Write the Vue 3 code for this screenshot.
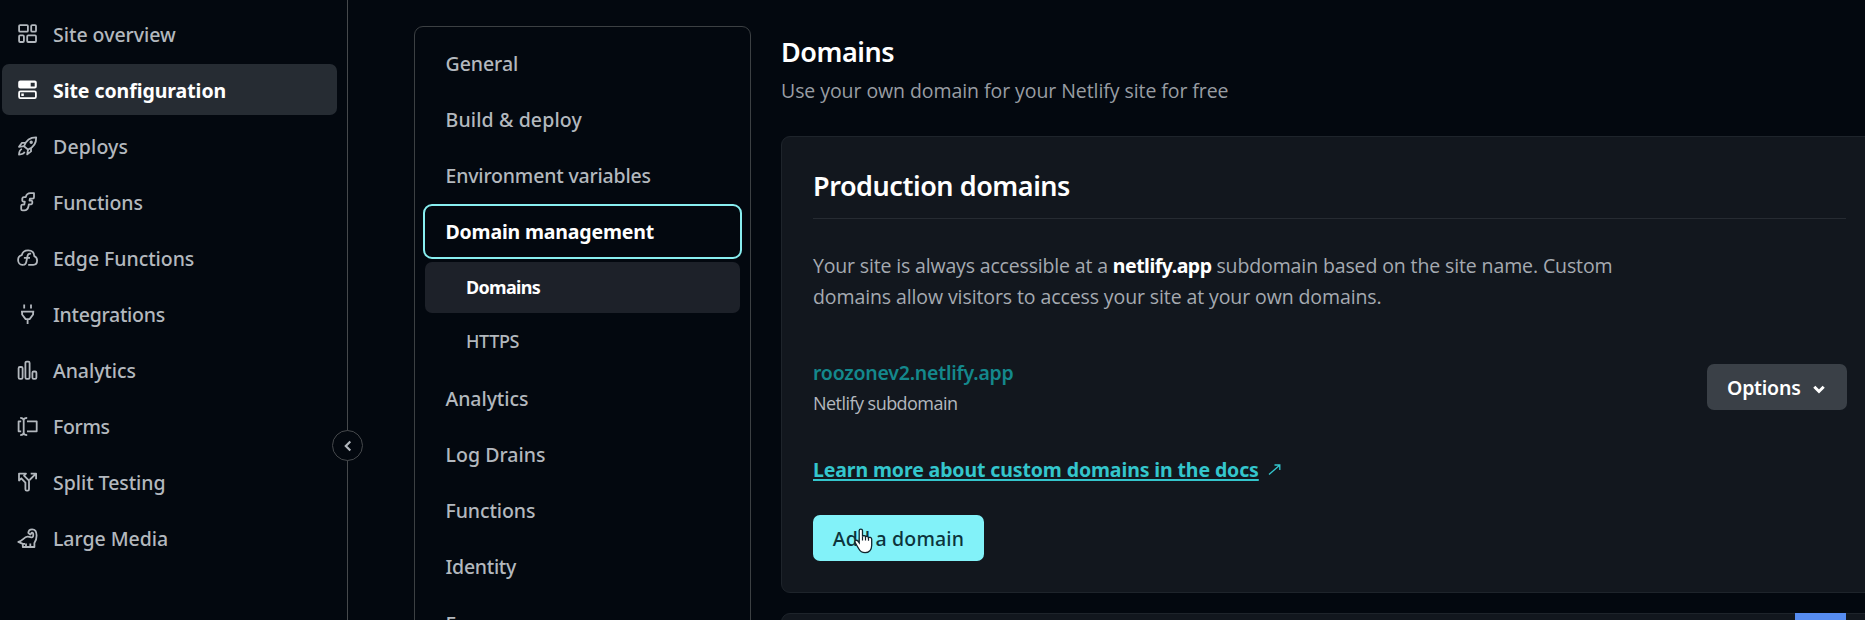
<script setup>
const siteNav = [
  { label: 'Site overview', icon: 'overview', track: -0.02 },
  { label: 'Site configuration', icon: 'config', track: -0.06, active: true },
  { label: 'Deploys', icon: 'deploys', track: 0.15 },
  { label: 'Functions', icon: 'functions', track: -0.09 },
  { label: 'Edge Functions', icon: 'edge', track: -0.05 },
  { label: 'Integrations', icon: 'plug', track: -0.28 },
  { label: 'Analytics', icon: 'bars', track: -0.07 },
  { label: 'Forms', icon: 'forms', track: -0.36 },
  { label: 'Split Testing', icon: 'split', track: -0.05 },
  { label: 'Large Media', icon: 'media', track: -0.04 },
]

const settingsNav = [
  { label: 'General', track: -0.05 },
  { label: 'Build & deploy', track: 0.13 },
  { label: 'Environment variables', track: -0.18 },
  {
    label: 'Domain management',
    track: -0.18,
    focused: true,
    children: [
      { label: 'Domains', track: -0.7, active: true },
      { label: 'HTTPS', track: -0.38 },
    ],
  },
  { label: 'Analytics', track: -0.07 },
  { label: 'Log Drains', track: 0.04 },
  { label: 'Functions', track: -0.09 },
  { label: 'Identity', track: -0.3 },
  { label: 'Forms', track: -0.36 },
]

const spacing = (item) => ({ letterSpacing: item.track + 'px' })
</script>

<template>
  <div class="screen">
    <aside class="sidebar">
      <a v-for="item in siteNav" :key="item.label" class="nav-row" :class="{ active: item.active }">
        <svg class="icon" viewBox="0 0 22 22" width="22" height="22">
          <template v-if="item.icon === 'overview'">
            <rect x="2.1" y="2.1" width="8.8" height="6.6" rx="1" />
            <rect x="14.2" y="2.1" width="4.8" height="6.6" rx="1" />
            <rect x="2.1" y="12.4" width="4.8" height="6.6" rx="1" />
            <rect x="10.2" y="12.4" width="8.8" height="6.6" rx="1" />
          </template>
          <template v-else-if="item.icon === 'config'">
            <path class="solid" fill-rule="evenodd" d="M3.2 1.6h14.6a2 2 0 0 1 2 2v4a2 2 0 0 1-2 2H3.2a2 2 0 0 1-2-2v-4a2 2 0 0 1 2-2zM13.7 3.7v3.8h4V3.7z" />
            <rect x="2.1" y="12.4" width="16.8" height="6.7" rx="1.3" />
            <rect class="solid" x="4.3" y="14.5" width="2.5" height="2.5" />
          </template>
          <template v-else-if="item.icon === 'deploys'">
            <path d="M7 11.2C8.700 6.500 12.500 2.300 19.200 2.400C19.300 8.800 15.700 12.700 11 14.600z" />
            <path d="M8.500 7.800H5L2 11.800L7 11.200M14 13V16.400L10.200 19.400L11 14.600" />
            <path d="M5 14C2.600 14.600 2.200 17 2 19.500C4.500 19.400 6.800 19 7.600 16.700" />
            <circle cx="14.200" cy="7.300" r="0.800" />
          </template>
          <template v-else-if="item.icon === 'functions'">
            <path d="M17 2.200h-3.500C10.500 2.200 9.300 3.600 8.800 6.100H6.900Q5.500 6.100 5.300 7.500V9.700Q5.400 10.600 6.400 10.600H7.800L7.300 13.600H5.500Q4.300 13.600 4.200 14.800V18Q4.200 19.400 5.600 19.400H7.400C10 19.400 11 17.800 11.500 15.300L11.900 13.300H14.200Q15.200 13.200 15.300 12.200V10.500Q15.200 9.700 14.300 9.600H12.500L12.900 7.600H15.600Q17 7.500 17 6.200z" />
          </template>
          <template v-else-if="item.icon === 'edge'">
            <path d="M6.200 17.800H5.300C2.900 17.800 1.100 15.700 1.100 13C1.100 10.300 2.700 8.700 4.800 8.200C5.300 5.200 7.900 3.300 11.200 3.300C15 3.300 17.200 5.700 17.200 9.100C19 9.700 20.100 11.300 20.100 13.500C20.100 16.100 18.500 17.800 16.300 17.800H11.200" />
            <path d="M14.100 6.600H12.900C11.200 6.600 10.700 8 10.400 9.600L9.200 15.200C8.900 17 8.200 17.800 6.200 17.800M6.900 10.900H13" />
          </template>
          <template v-else-if="item.icon === 'plug'">
            <path d="M7.200 1.600V5.600M14 1.600V5.600M4 8.700H17.200M5.100 8.700V11.500L8.600 16.100H12.600L16.100 11.500V8.700M10.600 16.100V21" />
          </template>
          <template v-else-if="item.icon === 'bars'">
            <rect x="1.600" y="8" width="4" height="11.800" rx="1.300" />
            <rect x="8.400" y="2.600" width="4.200" height="17.200" rx="1.300" />
            <rect x="15.400" y="12.500" width="4" height="7.300" rx="1.300" />
          </template>
          <template v-else-if="item.icon === 'forms'">
            <path d="M3.200 2.800C5.600 2.800 6.700 3.600 6.700 5.500V17.600C6.700 19.400 5.600 20.200 3.200 20.200M10.200 2.800C7.900 2.800 6.700 3.600 6.700 5.500M10.200 20.200C7.900 20.200 6.700 19.400 6.700 17.600M4.200 6.300H1.600V16.300H4.200M10 6.300H19.700V16.300H10" />
          </template>
          <template v-else-if="item.icon === 'split'">
            <path d="M2 9.500V2.600H9L7 4.700L12 9.700V18.300Q12 19.700 10.700 19.700H9.700Q8.400 19.700 8.400 18.300V11.600L4.300 7.300z" />
            <path d="M12.500 9L19 2.600M13.700 2.600H19.100V8.200" />
          </template>
          <template v-else>
            <path d="M13.200 7.600L11.300 5.900C11.500 3.600 13.100 2.400 15.100 2.400C18 2.400 19.600 4.500 19.600 8.500C19.600 11.500 18.800 14 17.400 16V20H5.800V16.900L1.300 14.900C5.600 14.100 6.800 10 10.500 9.700C13.800 9.500 16.200 12 16.300 8C16.300 6.500 15.900 5.600 15 5.700C14.200 5.800 14.300 6.800 13.200 7.600z" />
            <path d="M9 20V16.600M13.300 20V16.600M5.800 16.900H8" />
          </template>
        </svg>
        <span :style="spacing(item)">{{ item.label }}</span>
      </a>
      <button class="collapse" aria-label="Collapse sidebar">
        <svg viewBox="0 0 12 12" width="12" height="12"><path d="M8.300 1.500L3.800 6L8.300 10.500" /></svg>
      </button>
    </aside>

    <nav class="settings">
      <template v-for="item in settingsNav" :key="item.label">
        <a class="settings-row" :class="{ focused: item.focused }"><span :style="spacing(item)">{{ item.label }}</span></a>
        <div v-if="item.children" class="sub">
          <a v-for="child in item.children" :key="child.label" class="sub-row" :class="{ active: child.active }">
            <span :style="spacing(child)">{{ child.label }}</span>
          </a>
        </div>
      </template>
    </nav>

    <main class="main">
      <h1>Domains</h1>
      <p class="intro">Use your own domain for your Netlify site for free</p>

      <section class="card">
        <h2>Production domains</h2>
        <p class="copy">
          <span class="lead">Your site is always accessible at a</span> <strong>netlify.app</strong> <span class="tail">subdomain based on the site name. Custom</span><br />domains allow visitors to access your site at your own domains.
        </p>
        <div class="domain">
          <div>
            <a class="domain-link">roozonev2.netlify.app</a>
            <p class="kind">Netlify subdomain</p>
          </div>
          <button class="options">
            <span>Options</span>
            <svg viewBox="0 0 12 9" width="12" height="9"><path d="M1.300 1.800L6 6.500L10.700 1.800" /></svg>
          </button>
        </div>
        <p class="docs">
          <a>Learn more about custom domains in the docs</a>
          <svg viewBox="0 0 13 13" width="13" height="13"><path d="M1 11.600L11.600 2.200M6.500 2H11.800V7" /></svg>
        </p>
        <button class="add">
          <span>Add a domain</span>
          <svg class="cursor" viewBox="0 0 19 26" width="19" height="26">
            <path class="hand" d="M5.200 2.600C5.200 0.500 8.500 0.500 8.500 2.600V8.500C8.900 7.200 11.300 7.400 11.500 8.900C12 7.900 14.200 8.100 14.400 9.700C15.200 8.900 17.700 9.300 17.700 11.200V17.300C17.700 21.800 14.900 24.700 11.100 24.700C7.900 24.700 6.100 23.300 4.600 20.500L1.300 14.800C0.100 12.700 2.500 11.400 3.900 13L5.200 14.800z" />
            <path class="fingers" d="M8.500 8.500V12.400M11.500 8.900V12.600M14.500 9.700V12.800" />
          </svg>
        </button>
      </section>

      <section class="card next"><span class="block"></span></section>
    </main>
  </div>
</template>

<style>
body {
  background: #03080f;
}
</style>

<style scoped>
* {
  box-sizing: border-box;
}
.screen {
  display: flex;
  width: 1865px;
  height: 620px;
  overflow: hidden;
  background: #03080f;
  color: #b3b8be;
  font: 400 19.5px/31px 'Noto Sans', sans-serif;
}
h1, h2, p {
  margin: 0;
}
button {
  border: 0;
  padding: 0;
  font: inherit;
}
svg {
  display: block;
  fill: none;
  stroke: currentColor;
}
.sidebar {
  position: relative;
  flex: none;
  display: flex;
  flex-direction: column;
  gap: 5.100px;
  width: 348px;
  padding: 8px 10px 0 2px;
  border-right: 1px solid #46494c;
  font-weight: 500;
}
.nav-row {
  flex: none;
  display: flex;
  align-items: center;
  gap: 14px;
  height: 51px;
  padding-left: 15px;
  border-radius: 7px;
  white-space: nowrap;
}
.nav-row span {
  padding-top: 1px;
}
.nav-row.active {
  background: #262c33;
  color: #fff;
  font-weight: 700;
}
.icon {
  flex: none;
  stroke-width: 1.800;
  stroke-linejoin: round;
}
.solid {
  fill: currentColor;
  stroke: none;
}
.collapse {
  position: absolute;
  right: -16px;
  top: 430px;
  display: grid;
  place-items: center;
  width: 31px;
  height: 31px;
  border: 1px solid #46494c;
  border-radius: 50%;
  background: #03080f;
  color: #b1b6bc;
}
.collapse svg {
  stroke-width: 2.200;
}
.settings {
  flex: none;
  display: flex;
  flex-direction: column;
  gap: 5px;
  width: 337px;
  height: 640px;
  margin: 26px 0 0 66px;
  padding: 11px 10px 0;
  border: 1px solid #3c4043;
  border-radius: 9px;
  font-weight: 500;
}
.settings-row, .sub-row {
  flex: none;
  display: flex;
  align-items: center;
  height: 51px;
  padding-left: 20.500px;
  border-radius: 7px;
  white-space: nowrap;
}
.settings-row:last-child {
  margin-top: 1px;
}
.settings-row.focused {
  outline: 2px solid #88eef0;
  color: #fff;
  font-weight: 700;
}
.sub {
  display: flex;
  flex-direction: column;
  gap: 3px;
  padding-bottom: 1px;
  font-size: 18px;
}
.sub-row {
  padding-left: 41px;
}
.sub-row.active {
  background: #1d2129;
  color: #fff;
  font-weight: 700;
}
.main {
  flex: none;
  width: 1100px;
  margin-left: 30px;
  padding-top: 34px;
}
h1, h2 {
  color: #fff;
  font-size: 27px;
  font-weight: 600;
  line-height: 36px;
  letter-spacing: -0.45px;
}
.intro {
  margin-top: 5px;
  color: #989da3;
  font-family: 'Open Sans', sans-serif;
  letter-spacing: -0.07px;
}
.card {
  height: 457px;
  margin-top: 30px;
  padding: 31px 34px 0 31px;
  border: 1px solid #1e242b;
  border-radius: 9px;
  background: #12171e;
}
h2 {
  height: 51px;
  border-bottom: 1px solid #262b32;
}
.copy {
  margin-top: 31px;
  color: #a5aab1;
  font-family: 'Open Sans', sans-serif;
  letter-spacing: -0.1px;
  white-space: nowrap;
}
.lead {
  letter-spacing: -0.16px;
}
.tail {
  letter-spacing: -0.12px;
}
.copy strong {
  color: #fff;
  font-family: 'Noto Sans', sans-serif;
  font-weight: 700;
  letter-spacing: -0.5px;
}
.domain {
  display: flex;
  justify-content: space-between;
  width: 1034px;
  margin-top: 45px;
}
.domain-link {
  display: block;
  color: #14888c;
  font-weight: 600;
  letter-spacing: -0.22px;
}
.kind {
  font-family: 'Open Sans', sans-serif;
  font-size: 18px;
  letter-spacing: -0.54px;
}
.options {
  display: flex;
  align-items: center;
  gap: 12px;
  width: 140px;
  height: 46px;
  margin-top: 7px;
  padding: 1px 0 0 20px;
  border-radius: 7px;
  background: #3a4047;
  color: #fff;
  font-weight: 600;
  letter-spacing: -0.22px;
}
.options svg {
  margin-top: 3px;
  stroke-width: 3;
}
.docs {
  display: flex;
  align-items: center;
  gap: 9px;
  margin-top: 35px;
  color: #34c6cd;
  font-weight: 700;
  letter-spacing: -0.12px;
}
.docs a {
  text-decoration: underline;
  text-decoration-thickness: 2px;
  text-underline-offset: 2px;
  text-decoration-skip-ink: none;
}
.docs svg {
  stroke-width: 1.300;
}
.add {
  position: relative;
  width: 171px;
  height: 46px;
  margin-top: 30px;
  border-radius: 7px;
  background: #82f2f9;
  color: #0c343c;
  font-weight: 500;
  letter-spacing: 0.17px;
}
.add span {
  display: block;
}
.cursor {
  position: absolute;
  left: 41px;
  top: 13px;
}
.hand {
  fill: #fff;
  stroke: #10252d;
  stroke-width: 1.300;
}
.fingers {
  stroke: #10252d;
  stroke-width: 1.200;
}
.next {
  display: flex;
  justify-content: flex-end;
  height: 60px;
  margin-top: 20px;
  padding: 0 34px 0 0;
}
.block {
  width: 51px;
  margin-top: -1px;
  background: #568cf0;
}
</style>
